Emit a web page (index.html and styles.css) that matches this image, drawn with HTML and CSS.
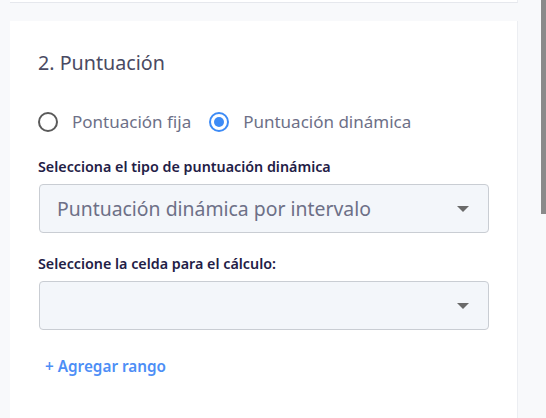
FILE: index.html
```html
<!DOCTYPE html>
<html lang="es">
<head>
<meta charset="utf-8">
<link rel="stylesheet" href="styles.css">
</head>
<body>
<div class="layout">
  <main class="page">
    <div class="prev-card"></div>
    <section class="card">
      <h2 class="title">2. Puntuación</h2>
      <div class="radios">
        <label class="radio"><span class="dot"></span><span class="rlabel">Pontuación fija</span></label>
        <label class="radio checked"><span class="dot"></span><span class="rlabel">Puntuación dinámica</span></label>
      </div>
      <div class="field">
        <div class="flabel">Selecciona el tipo de puntuación dinámica</div>
        <div class="select"><span class="value">Puntuación dinámica por intervalo</span><span class="caret"></span></div>
      </div>
      <div class="field second">
        <div class="flabel">Seleccione la celda para el cálculo:</div>
        <div class="select"><span class="value"></span><span class="caret"></span></div>
      </div>
      <a class="add">+ Agregar rango</a>
    </section>
  </main>
  <div class="scrollbar"><div class="thumb"></div></div>
</div>
</body>
</html>
```

FILE: styles.css
```css
html, body { height: 100%; }
body {
  margin: 0;
  background: #f8f9fb;
  font-family: "Noto Sans", "Open Sans", sans-serif;
  overflow: hidden;
}
.layout {
  display: flex;
  height: 100%;
}
.page {
  flex: 1;
  overflow: hidden;
}
.scrollbar {
  width: 6px;
  background: #f8f9fb;
  flex-shrink: 0;
}
.thumb {
  height: 214px;
  margin-left: 1px;
  background: #8a8a8a;
}

.prev-card {
  margin: 0 22px 0 10px;
  height: 2px;
  background: #fff;
  border-bottom: 1px solid #e6e8ed;
  border-right: 1px solid #eceef2;
}
.card {
  margin: 18px 22px 0 10px;
  background: #fff;
  border-right: 1px solid #eceef2;
  padding: 28px 28px 300px 28px;
}
.title {
  margin: 0;
  font-size: 19.7px;
  line-height: 26px;
  font-weight: 400;
  color: #4a4a62;
  padding-top: 1px;
}
.radios {
  display: flex;
  gap: 18px;
  margin-top: 34px;
  align-items: center;
}
.radio {
  display: flex;
  align-items: center;
  gap: 14px;
}
.dot {
  box-sizing: border-box;
  width: 20px;
  height: 20px;
  border-radius: 50%;
  border: 2px solid #5a5a5a;
  display: flex;
  align-items: center;
  justify-content: center;
}
.checked .dot { border-color: #3d8bf6; }
.checked .dot::after {
  content: "";
  width: 10px;
  height: 10px;
  border-radius: 50%;
  background: #3d8bf6;
}
.rlabel {
  font-size: 17px;
  line-height: 24px;
  color: #6d7087;
}
.field { margin-top: 23px; padding-left: 1px; }
.field.second { margin-top: 21px; }
.flabel {
  font-size: 14.3px;
  font-weight: 600;
  line-height: 20px;
  color: #1f2046;
  margin-left: -1px;
}
.select {
  margin-top: 7px;
  box-sizing: border-box;
  height: 49px;
  width: 450px;
  background: #f3f6fa;
  border: 1px solid #c9cdd3;
  border-radius: 4px;
  display: flex;
  align-items: center;
  justify-content: space-between;
  padding: 0 19px 0 17px;
}
.value {
  font-size: 19.4px;
  color: #6d7087;
}
.caret {
  width: 0;
  height: 0;
  border-left: 6px solid transparent;
  border-right: 6px solid transparent;
  border-top: 6px solid #6a6a6a;
}
.add {
  display: block;
  margin-top: 25px;
  margin-left: 7px;
  font-size: 15.3px;
  font-weight: 600;
  color: #4d8ef6;
  line-height: 22px;
}
```
